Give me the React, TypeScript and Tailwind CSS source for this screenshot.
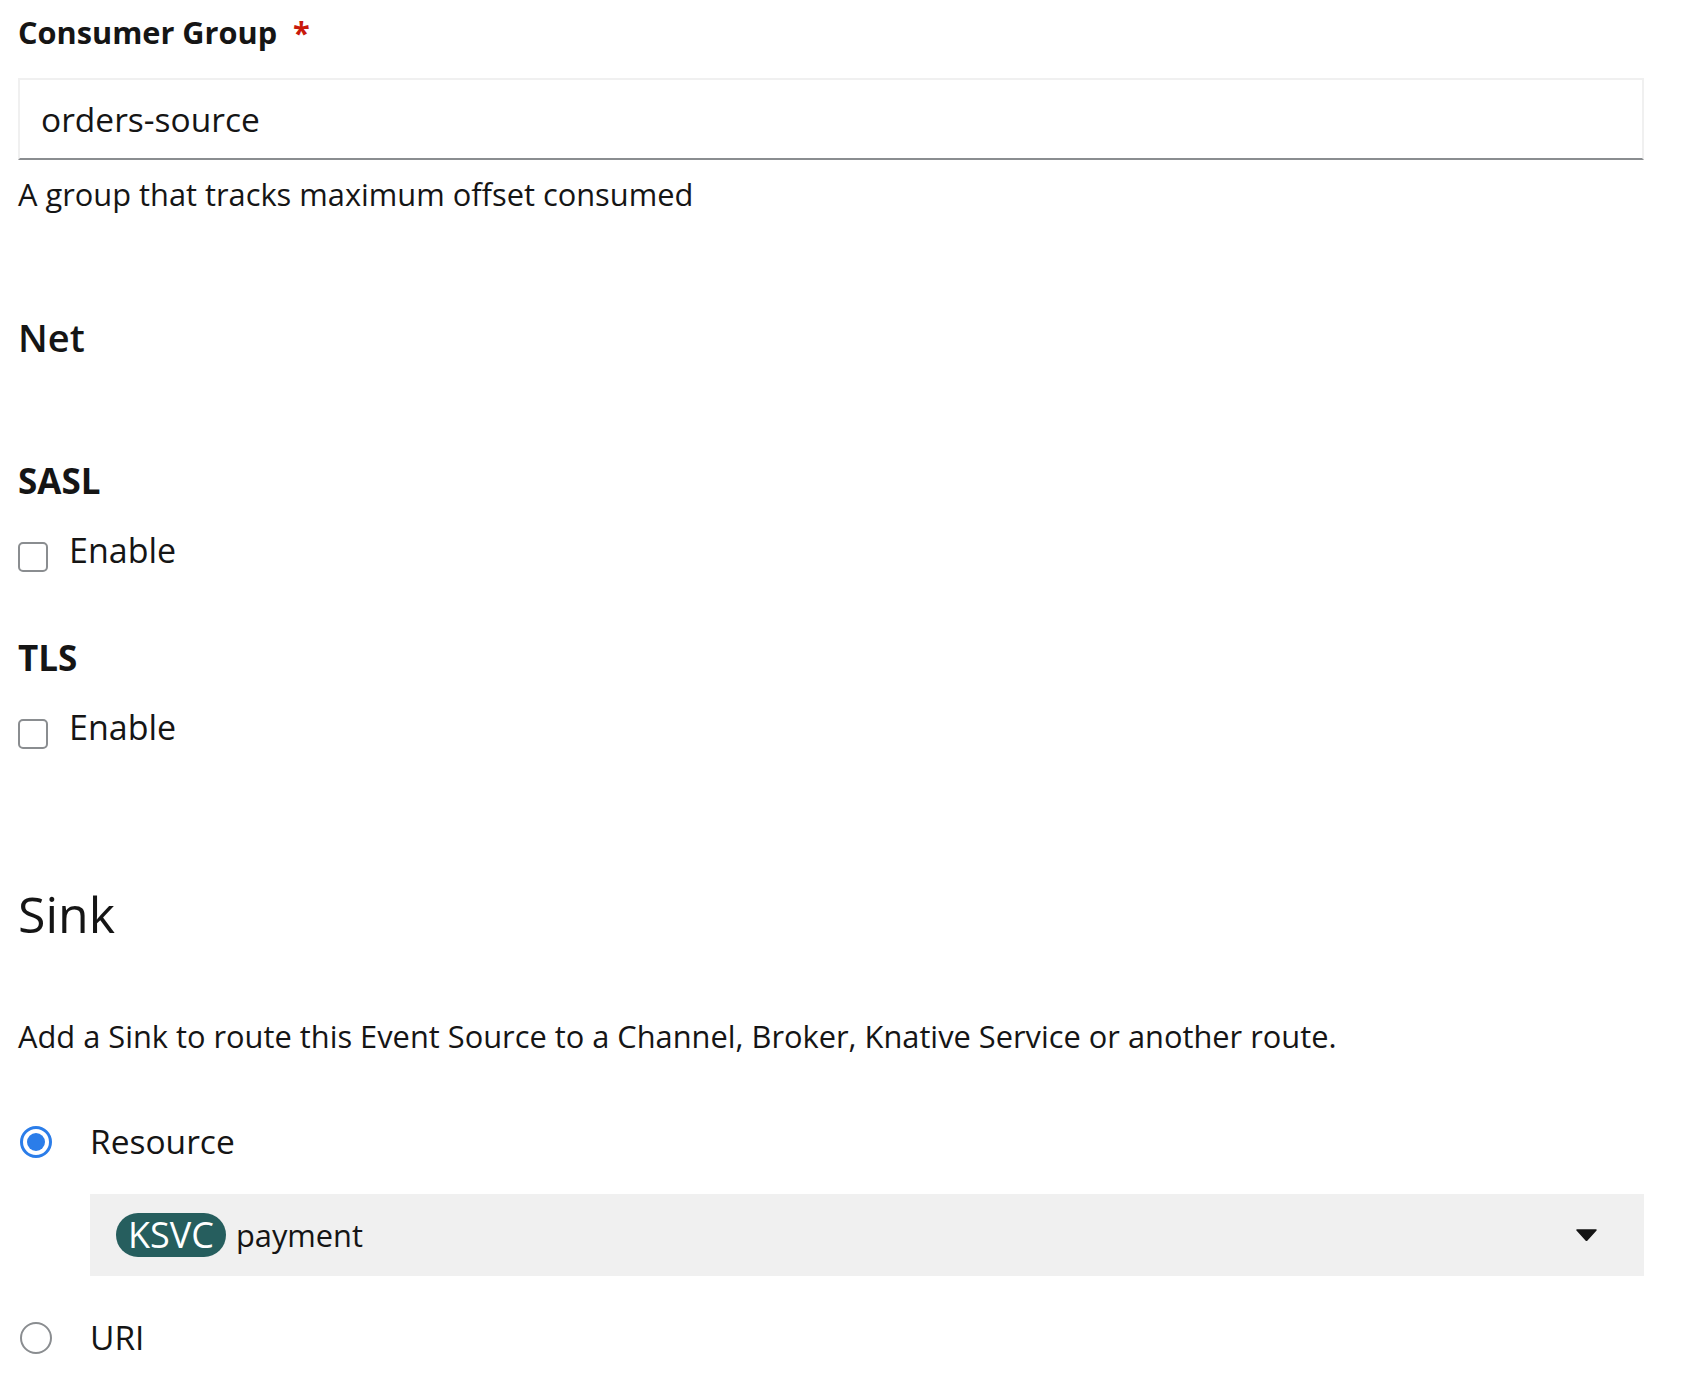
const font = { fontFamily: '"Open Sans", "Noto Sans", sans-serif' };

function Checkbox({ label }: { label: string }) {
  return (
    <div className="flex items-start">
      <span className="mt-[12px] h-[30px] w-[30px] shrink-0 rounded-[5px] border-2 border-[#8a8d90] bg-white" />
      <span className="ml-[21px] text-[34px] leading-[40px]">{label}</span>
    </div>
  );
}

function Radio({ label, checked }: { label: string; checked?: boolean }) {
  return (
    <div className="flex items-start">
      <span
        className={
          checked
            ? "ml-[2px] mt-[5px] flex h-[32px] w-[32px] shrink-0 items-center justify-center rounded-full border-[3px] border-[#2b7de9] bg-white"
            : "ml-[2px] mt-[5px] flex h-[32px] w-[32px] shrink-0 items-center justify-center rounded-full border-2 border-[#8a8d90] bg-white"
        }
      >
        {checked && <span className="h-[18px] w-[18px] rounded-full bg-[#2b7de9]" />}
      </span>
      <span className="ml-[38px] text-[33.5px] leading-[40px]">{label}</span>
    </div>
  );
}

export default function App() {
  return (
    <div className="min-h-screen bg-white text-[#151515]" style={font}>
      <div className="ml-[18px] w-[1626px] pt-[14px] pb-[40px]">
        <label className="block text-[30.7px] font-bold leading-[36px]">
          Consumer Group
          <span className="ml-[16px] text-[#c9190b]">*</span>
        </label>
        <div className="mt-[28px] flex h-[82px] items-center border-2 border-[#f0f0f0] border-b-[#8a8d90] pl-[21px] text-[33.5px]">
          orders-source
        </div>
        <p className="mt-[16px] text-[30.8px] leading-[36px]">A group that tracks maximum offset consumed</p>

        <h3 className="mt-[102px] text-[38px] font-semibold leading-[46px]">Net</h3>

        <h4 className="mt-[101px] text-[35px] font-bold leading-[40px]">SASL</h4>
        <div className="mt-[29px]">
          <Checkbox label="Enable" />
        </div>

        <h4 className="mt-[66px] text-[35px] font-bold leading-[40px]">TLS</h4>
        <div className="mt-[29px]">
          <Checkbox label="Enable" />
        </div>

        <h2 className="mt-[135px] text-[50px] leading-[60px]">Sink</h2>
        <p className="mt-[72px] text-[30.8px] leading-[40px]">
          Add a Sink to route this Event Source to a Channel, Broker, Knative Service or another route.
        </p>

        <div className="mt-[65px]">
          <Radio label="Resource" checked />
        </div>
        <div className="ml-[72px] mt-[33px] flex h-[82px] items-center bg-[#f0f0f0] pl-[26px] pr-[47px]">
          <span className="flex h-[44px] items-center rounded-full bg-[#265e5e] px-[12px] text-[36px] leading-none text-white">
            KSVC
          </span>
          <span className="ml-[10px] text-[30.8px]">payment</span>
          <svg className="ml-auto" width="21" height="12" viewBox="0 0 21 12">
            <path d="M1 1 L20 1 L10.5 11.5 Z" fill="#151515" stroke="#151515" strokeWidth="1.5" strokeLinejoin="round" />
          </svg>
        </div>
        <div className="mt-[41px]">
          <Radio label="URI" />
        </div>
      </div>
    </div>
  );
}
